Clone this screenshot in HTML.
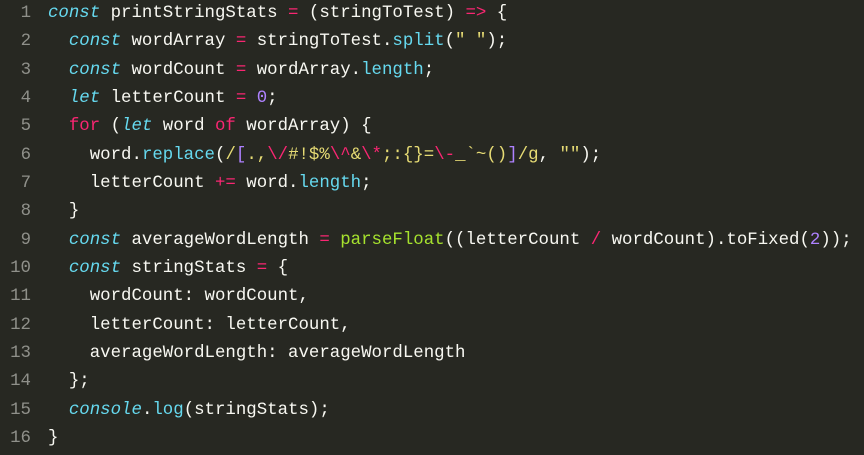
<!DOCTYPE html>
<html><head><meta charset="utf-8"><style>
html,body{margin:0;padding:0;background:#272822;width:864px;height:455px;overflow:hidden}
.w{position:absolute;left:0;top:0px;font-family:"Liberation Mono",monospace;font-size:17.4px;line-height:28.33px;color:#f8f8f2;white-space:normal}
.l{display:block;height:28.33px;white-space:pre}
.n{display:inline-block;width:31px;text-align:right;color:#8f908a;margin-right:17px}
.k{color:#66d9ef;font-style:italic}
.c{color:#66d9ef}
.p{color:#f92672}
.g{color:#a6e22e}
.s{color:#e6db74}
.m{color:#ae81ff}
</style></head><body><div class="w">
<div class="l"><span class="n">1</span><span class="k">const</span> printStringStats <span class="p">=</span> (stringToTest) <span class="p">=&gt;</span> {</div>
<div class="l"><span class="n">2</span>  <span class="k">const</span> wordArray <span class="p">=</span> stringToTest.<span class="c">split</span>(<span class="s">" "</span>);</div>
<div class="l"><span class="n">3</span>  <span class="k">const</span> wordCount <span class="p">=</span> wordArray.<span class="c">length</span>;</div>
<div class="l"><span class="n">4</span>  <span class="k">let</span> letterCount <span class="p">=</span> <span class="m">0</span>;</div>
<div class="l"><span class="n">5</span>  <span class="p">for</span> (<span class="k">let</span> word <span class="p">of</span> wordArray) {</div>
<div class="l"><span class="n">6</span>    word.<span class="c">replace</span>(<span class="s">/</span><span class="m">[</span><span class="s">.,</span><span class="p">\/</span><span class="s">#!$%</span><span class="p">\^</span><span class="s">&amp;</span><span class="p">\*</span><span class="s">;:{}=</span><span class="p">\-</span><span class="s">_`~()</span><span class="m">]</span><span class="s">/g</span>, <span class="s">""</span>);</div>
<div class="l"><span class="n">7</span>    letterCount <span class="p">+=</span> word.<span class="c">length</span>;</div>
<div class="l"><span class="n">8</span>  }</div>
<div class="l"><span class="n">9</span>  <span class="k">const</span> averageWordLength <span class="p">=</span> <span class="g">parseFloat</span>((letterCount <span class="p">/</span> wordCount).toFixed(<span class="m">2</span>));</div>
<div class="l"><span class="n">10</span>  <span class="k">const</span> stringStats <span class="p">=</span> {</div>
<div class="l"><span class="n">11</span>    wordCount: wordCount,</div>
<div class="l"><span class="n">12</span>    letterCount: letterCount,</div>
<div class="l"><span class="n">13</span>    averageWordLength: averageWordLength</div>
<div class="l"><span class="n">14</span>  };</div>
<div class="l"><span class="n">15</span>  <span class="k">console</span>.<span class="c">log</span>(stringStats);</div>
<div class="l"><span class="n">16</span>}</div>
</div></body></html>
